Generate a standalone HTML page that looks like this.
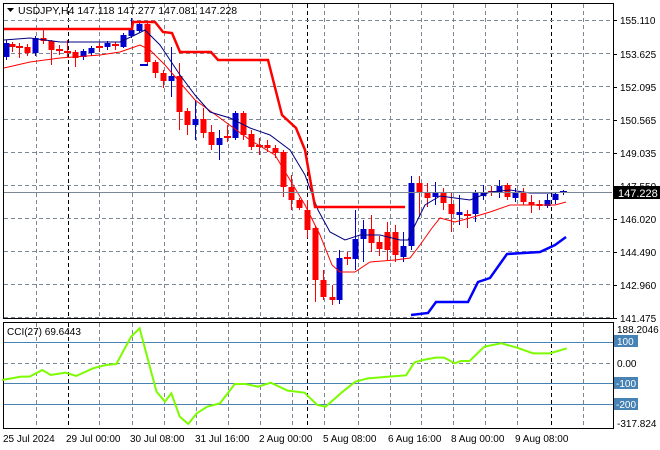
<!DOCTYPE html>
<html><head><meta charset="utf-8"><style>
html,body{margin:0;padding:0;background:#fff;width:660px;height:450px;overflow:hidden}
svg{display:block;font-family:"Liberation Sans",sans-serif}
</style></head><body>
<svg id="s" width="660" height="450" xmlns="http://www.w3.org/2000/svg">
<rect width="660" height="450" fill="#fff"/>
<g id="grid" stroke="#7a8797" stroke-dasharray="4,3" stroke-width="1"></g>
<g id="cand"></g>
<polyline fill="none" stroke="#ff0000" stroke-width="1" points="4,68 30,62 60,58 100,55 120,52 140,45 150,50 165,65 195,100 220,118 250,140 275,155 290,180 305,205 320,235 332,265 340,272 355,272 370,262 395,260 410,258 420,245 432,228 440,218 455,222 470,218 490,212 510,205 540,205 555,205 566,202"/>
<polyline fill="none" stroke="#000080" stroke-width="1" points="4,40 30,38 60,42 100,42 120,42 135,35 145,30 160,45 180,75 195,95 210,112 230,118 250,128 270,135 290,150 305,175 318,210 330,232 345,240 360,235 380,235 400,240 408,240 415,225 425,205 440,196 455,198 470,200 490,192 510,190 530,193 550,193 566,192"/>
<polyline fill="none" stroke="#ff0000" stroke-width="2.5" points="3,29 132,29 133,22 155,22 163,32 172,33 180,52 211,52 218,60 268,60 282,115 296,128 305,150 315,207 405,207"/>
<polyline fill="none" stroke="#0000ff" stroke-width="2.5" points="411,315 428,313 436,302 468,302 478,282 490,278 507,254 540,252 555,245 566,237"/>
<line x1="3" y1="192.5" x2="612" y2="192.5" stroke="#7a8797" stroke-width="1"/>
<rect x="3.5" y="3.5" width="610" height="315" fill="none" stroke="#000"/>
<rect x="3.5" y="322.5" width="610" height="106" fill="none" stroke="#000"/>
<g stroke="#4682b4" stroke-width="1">
<line x1="4" y1="342.5" x2="613" y2="342.5"/><line x1="4" y1="383.5" x2="613" y2="383.5"/><line x1="4" y1="404.5" x2="613" y2="404.5"/>
</g>
<line x1="4" y1="363.5" x2="613" y2="363.5" stroke="#7a8797" stroke-dasharray="4,3"/>
<g transform="translate(0,310) scale(0.423,0.3333)">
<polyline fill="none" stroke="#7cfc00" stroke-width="2" vector-effect="non-scaling-stroke" points="5,210 50,200 70,200 100,180 120,195 155,188 180,198 220,175 250,165 275,162 310,80 330,55 370,245 390,275 405,250 425,320 445,342 465,310 490,290 520,280 555,222 580,222 610,230 640,218 680,242 720,248 750,285 770,290 810,245 840,215 870,205 920,200 960,196 980,157 1000,150 1030,143 1050,143 1075,160 1090,153 1110,153 1145,110 1185,100 1220,112 1260,130 1300,130 1340,115"/>
</g>
<polygon points="7,8 14,8 10.5,12" fill="#000"/>
<text x="18" y="14" font-size="10.5" fill="#000">USDJPY,H4  147.118 147.277 147.081 147.228</text>
<text x="7" y="335" font-size="10" fill="#000">CCI(27) 69.6443</text>
<g font-size="10" fill="#000" id="ax"></g>
<rect x="613" y="186" width="47" height="13" fill="#000"/>
<text x="618" y="197" font-size="11" fill="#fff">147.228</text>
<g font-size="10">
<rect x="614" y="335" width="24" height="12" fill="#4682b4"/><text x="617" y="345" fill="#fff">100</text>
<text x="617" y="367" fill="#000">0.00</text>
<rect x="614" y="377" width="24" height="12" fill="#4682b4"/><text x="616" y="387" fill="#fff">-100</text>
<rect x="614" y="398" width="24" height="12" fill="#4682b4"/><text x="616" y="408" fill="#fff">-200</text>
<text x="617" y="333" fill="#000">188.2046</text>
<text x="617" y="427" fill="#000">-317.824</text>
</g>
<g font-size="10" fill="#000">
<text x="3" y="442">25 Jul 2024</text><text x="66" y="442">29 Jul 00:00</text><text x="130" y="442">30 Jul 08:00</text><text x="195" y="442">31 Jul 16:00</text><text x="259" y="442">2 Aug 00:00</text><text x="323" y="442">5 Aug 08:00</text><text x="388" y="442">6 Aug 16:00</text><text x="451" y="442">8 Aug 00:00</text><text x="515" y="442">9 Aug 08:00</text>
</g>
</svg>
<script>
var NS="http://www.w3.org/2000/svg";
function el(p,t,a){var e=document.createElementNS(NS,t);for(var k in a)e.setAttribute(k,a[k]);p.appendChild(e);return e;}
var g=document.getElementById('grid');
var vx=[36,99,132,164,196,228,260,292,324,358,390,421,453,485,517,583];
vx.forEach(function(x){el(g,'line',{x1:x+.5,y1:4,x2:x+.5,y2:318});el(g,'line',{x1:x+.5,y1:323,x2:x+.5,y2:428});});
[68,307,551].forEach(function(x){el(g,'line',{x1:x+.5,y1:4,x2:x+.5,y2:318,stroke:'#000'});el(g,'line',{x1:x+.5,y1:323,x2:x+.5,y2:428,stroke:'#000'});});
[20,53,86,119,152,185,218,251,284,317].forEach(function(y){el(g,'line',{x1:4,y1:y+.5,x2:613,y2:y+.5});});
var ax=document.getElementById('ax');
[[20,'155.110'],[54,'153.625'],[87,'152.095'],[120,'150.565'],[153,'149.035'],[186,'147.550'],[219,'146.020'],[252,'144.490'],[285,'142.960'],[318,'141.475']].forEach(function(a){
 el(document.getElementById('s'),'line',{x1:613,y1:a[0]+.5,x2:617,y2:a[0]+.5,stroke:'#000'});
 var t=el(ax,'text',{x:620,y:a[0]+4});t.textContent=a[1];});
var C=[[6,57,43,40,60],[12,44,47,42,52],[19,47,47,43,58],[27,47,53,44,56],[35,53,38,36,56],[43,38,41,30,44],[51,41,50,40,65],[59,50,50,45,55],[67,52,52,40,57],[75,52,58,50,67],[83,57,51,49,60],[91,53,48,46,56],[99,47,47,43,52],[107,47,43,41,50],[115,45,45,42,50],[123,47,35,33,48],[131,36,30,18,38],[139,31,24,22,33],[147,24,62,22,64],[155,62,73,60,78],[163,73,81,70,88],[171,81,76,47,97],[179,76,112,63,130],[187,111,125,108,135],[195,125,119,100,140],[203,119,133,108,138],[211,132,145,125,150],[219,145,138,130,160],[227,137,137,125,142],[235,138,113,111,140],[243,113,135,111,140],[251,134,147,130,150],[259,146,146,138,155],[267,145,148,140,152],[275,148,153,145,158],[283,152,187,150,197],[291,187,200,175,210],[299,200,208,198,210],[307,210,230,200,238],[315,228,280,226,302],[323,280,297,270,300],[332,297,300,285,305],[339,300,258,250,304],[347,258,259,252,265],[355,259,239,210,270],[363,239,229,220,262],[371,229,243,215,252],[379,242,249,236,256],[387,232,250,222,260],[395,232,255,225,262],[403,257,246,232,262],[411,246,183,176,250],[419,183,192,176,217],[427,192,198,183,207],[435,197,193,182,205],[443,193,203,188,210],[451,204,214,192,232],[459,215,212,195,225],[467,215,215,210,228],[475,214,193,190,222],[483,196,192,185,200],[491,192,192,186,196],[499,192,186,180,198],[507,185,197,183,200],[515,198,192,188,202],[523,192,202,188,205],[531,202,205,195,213],[539,204,206,200,210],[547,206,200,194,208],[555,200,194,192,204],[563,193,192,190,195]];
var cg=document.getElementById('cand');
C.forEach(function(c){var col=c[2]<c[1]?'#0000cc':'#ff0000';
 el(cg,'line',{x1:c[0]+.5,y1:c[3],x2:c[0]+.5,y2:c[4],stroke:col,'stroke-width':1});
 var t=Math.min(c[1],c[2]),h=Math.abs(c[1]-c[2]);
 if(h<2){el(cg,'rect',{x:c[0]-3,y:t-1,width:7,height:2,fill:col});}
 else el(cg,'rect',{x:c[0]-2.5,y:t,width:6,height:h,fill:col});});
el(cg,'rect',{x:140,y:64,width:8,height:2,fill:'#0000cc'});
</script>
</body></html>
